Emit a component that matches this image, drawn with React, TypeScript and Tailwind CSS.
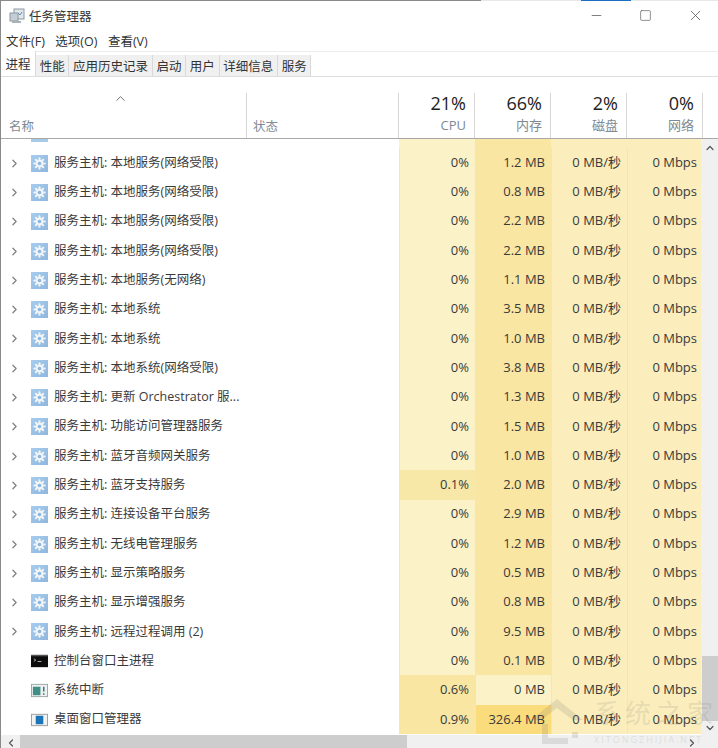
import { ChevronRight, ChevronUp, ChevronDown, ChevronLeft, Minus, Square, X } from "lucide-react";

type Kind = "svc" | "console" | "irq" | "dwm";

type Row = {
  name: string;
  cpu: string;
  mem: string;
  kind: Kind;
  cpuBg?: string;
  memBg: string;
};

const L1 = "bg-[#fbeebc]";
const L2 = "bg-[#f9e6a3]";
const L3 = "bg-[#f8e8a8]";
const LOW = "bg-[#fcf2c8]";
const HIGH = "bg-[#fbdc7c]";

const rows: Row[] = [
  { name: "服务主机: 本地服务(网络受限)", cpu: "0%", mem: "1.2 MB", kind: "svc", memBg: L2 },
  { name: "服务主机: 本地服务(网络受限)", cpu: "0%", mem: "0.8 MB", kind: "svc", memBg: L2 },
  { name: "服务主机: 本地服务(网络受限)", cpu: "0%", mem: "2.2 MB", kind: "svc", memBg: L2 },
  { name: "服务主机: 本地服务(网络受限)", cpu: "0%", mem: "2.2 MB", kind: "svc", memBg: L2 },
  { name: "服务主机: 本地服务(无网络)", cpu: "0%", mem: "1.1 MB", kind: "svc", memBg: L2 },
  { name: "服务主机: 本地系统", cpu: "0%", mem: "3.5 MB", kind: "svc", memBg: L2 },
  { name: "服务主机: 本地系统", cpu: "0%", mem: "1.0 MB", kind: "svc", memBg: L2 },
  { name: "服务主机: 本地系统(网络受限)", cpu: "0%", mem: "3.8 MB", kind: "svc", memBg: L2 },
  { name: "服务主机: 更新 Orchestrator 服...", cpu: "0%", mem: "1.3 MB", kind: "svc", memBg: L2 },
  { name: "服务主机: 功能访问管理器服务", cpu: "0%", mem: "1.5 MB", kind: "svc", memBg: L2 },
  { name: "服务主机: 蓝牙音频网关服务", cpu: "0%", mem: "1.0 MB", kind: "svc", memBg: L2 },
  { name: "服务主机: 蓝牙支持服务", cpu: "0.1%", mem: "2.0 MB", kind: "svc", cpuBg: L3, memBg: L2 },
  { name: "服务主机: 连接设备平台服务", cpu: "0%", mem: "2.9 MB", kind: "svc", memBg: L2 },
  { name: "服务主机: 无线电管理服务", cpu: "0%", mem: "1.2 MB", kind: "svc", memBg: L2 },
  { name: "服务主机: 显示策略服务", cpu: "0%", mem: "0.5 MB", kind: "svc", memBg: L2 },
  { name: "服务主机: 显示增强服务", cpu: "0%", mem: "0.8 MB", kind: "svc", memBg: L2 },
  { name: "服务主机: 远程过程调用 (2)", cpu: "0%", mem: "9.5 MB", kind: "svc", memBg: L2 },
  { name: "控制台窗口主进程", cpu: "0%", mem: "0.1 MB", kind: "console", memBg: L2 },
  { name: "系统中断", cpu: "0.6%", mem: "0 MB", kind: "irq", cpuBg: L2, memBg: LOW },
  { name: "桌面窗口管理器", cpu: "0.9%", mem: "326.4 MB", kind: "dwm", cpuBg: L2, memBg: HIGH },
];

function GearIcon() {
  return (
    <svg width="17" height="17" viewBox="0 0 18 18">
      <defs>
        <linearGradient id="tile" x1="0" y1="0" x2="1" y2="1">
          <stop offset="0" stopColor="#a6cdee" />
          <stop offset="1" stopColor="#8fb6dc" />
        </linearGradient>
      </defs>
      <rect width="18" height="18" fill="url(#tile)" />
      <g stroke="#eef4fa" strokeWidth="2.2" strokeLinecap="round">
        <path d="M9 3.5v11M3.5 9h11M5.1 5.1l7.8 7.8M12.9 5.1l-7.8 7.8" />
      </g>
      <circle cx="9" cy="9" r="4" fill="#eef4fa" />
      <circle cx="9" cy="9" r="1.9" fill="#8db6da" />
    </svg>
  );
}

function RowIcon({ kind }: { kind: Kind }) {
  if (kind === "svc") return <GearIcon />;
  if (kind === "console") {
    return (
      <svg width="17" height="17" viewBox="0 0 18 18">
        <rect y="2" width="18" height="13" fill="#0c0c0c" />
        <rect y="2" width="18" height="1.5" fill="#555" />
        <path d="M3 6l2 1.5-2 1.5M7 9h4" stroke="#bbb" strokeWidth="1" fill="none" />
      </svg>
    );
  }
  if (kind === "irq") {
    return (
      <svg width="17" height="17" viewBox="0 0 18 18">
        <rect x="0.5" y="2.5" width="17" height="13" fill="#eef1ef" stroke="#9aa5a5" />
        <rect x="2" y="5" width="8" height="9" fill="#3f8f88" />
        <path d="M13.5 5v5M13.5 12v1.5" stroke="#3f6f8f" strokeWidth="1.6" />
      </svg>
    );
  }
  return (
    <svg width="17" height="17" viewBox="0 0 18 18">
      <rect x="0.5" y="3.5" width="17" height="12" fill="#f2f2f0" stroke="#9c9c9c" />
      <rect x="5" y="5" width="8" height="9" fill="#1c74b8" />
    </svg>
  );
}

function AppIcon() {
  return (
    <svg width="16" height="16" viewBox="0 0 16 16">
      <rect x="5" y="1" width="10" height="10" fill="#dfe6ec" stroke="#8d979f" />
      <path d="M7 8l2-3 2 2 2-3" stroke="#5c8ab0" fill="none" />
      <rect x="1" y="5" width="8" height="8" fill="#c4cdd4" stroke="#8d979f" />
      <rect x="3" y="13" width="9" height="2" fill="#a9b2b9" />
    </svg>
  );
}

const tabs = ["性能", "应用历史记录", "启动", "用户", "详细信息", "服务"];

function MetricHead({ pct, label, width }: { pct: string; label: string; width: string }) {
  return (
    <div className={`${width} h-full shrink-0 border-l border-[#d6d6d6] flex flex-col items-end pr-[8px]`}>
      <span className="text-[18px] leading-[22px] mt-[-1px] text-[#222]">{pct}</span>
      <span className="text-[13px] leading-[18px] mt-[2px] text-[#7d8a96]">{label}</span>
    </div>
  );
}

function DataRow({ row }: { row: Row }) {
  return (
    <div className="flex h-[29.3px] items-stretch text-[13px] text-[#3a3a3a]">
      <div className="w-[398px] shrink-0 flex items-center min-w-0 text-[12.5px] pt-[1px]">
        <span className="w-[30px] shrink-0 flex pl-[7px]">
          {row.kind === "svc" && <ChevronRight size={13} strokeWidth={2.2} className="text-[#7f7f7f]" />}
        </span>
        <RowIcon kind={row.kind} />
        <span className="ml-[6px] whitespace-nowrap">{row.name}</span>
      </div>
      <Cell width="w-[76px]" bg={row.cpuBg ?? LOW} text={row.cpu} />
      <Cell width="w-[76px]" bg={row.memBg} text={row.mem} />
      <Cell width="w-[76px]" bg={L1} text="0 MB/秒" />
      <Cell width="w-[74px]" bg={L1} text="0 Mbps" pad="pr-[4px]" />
    </div>
  );
}

function Cell({ width, bg, text, pad = "pr-[6px]" }: { width: string; bg: string; text: string; pad?: string }) {
  return (
    <div className={`${width} ${bg} ${pad} shrink-0 flex items-center justify-end border-l border-[#f2e6b8]`}>
      <span className="whitespace-nowrap">{text}</span>
    </div>
  );
}

export default function App() {
  return (
    <div
      className="relative w-[718px] h-[748px] overflow-hidden bg-white border-l border-[#8a8a8a] flex flex-col"
      style={{ fontFamily: '"Open Sans", "Noto Sans CJK SC", sans-serif' }}
    >
      {/* top edge */}
      <div className="flex h-[1px] shrink-0">
        <div className="w-[480px] bg-[#8a8a8a]" />
        <div className="w-[100px] bg-[#e8e8e8]" />
        <div className="w-[50px] bg-[#1b6fc2]" />
        <div className="flex-1 bg-[#e8e8e8]" />
      </div>

      {/* title */}
      <div className="h-[29px] shrink-0 flex items-center pl-[8px] pr-[14px] text-[12.5px] text-[#333]">
        <AppIcon />
        <span className="ml-[4px] pt-[3px]">任务管理器</span>
        <div className="ml-auto flex items-center gap-[35px] text-[#555]">
          <Minus size={15} strokeWidth={1.2} />
          <Square size={13} strokeWidth={1.2} />
          <X size={17} strokeWidth={1.1} />
        </div>
      </div>

      {/* menu */}
      <div className="h-[22px] shrink-0 flex items-center gap-[10.5px] pl-[5px] pt-[3px] text-[12.5px] text-[#333] border-b border-[#ececec]">
        <span>文件(F)</span>
        <span>选项(O)</span>
        <span>查看(V)</span>
      </div>

      {/* tabs */}
      <div className="h-[25px] shrink-0 flex items-end border-b border-[#dedede] text-[12.5px] text-[#333]">
        <div className="w-[35px] h-[25px] flex items-center justify-center pt-[3px] bg-white border-r border-[#d9d9d9]">进程</div>
        {tabs.map((t) => (
          <div key={t} className="h-[21px] px-[3.7px] pt-[3px] flex items-center bg-[#f0f0f0] border-r border-[#d9d9d9]">
            {t}
          </div>
        ))}
      </div>

      {/* column heads */}
      <div className="h-[62px] shrink-0 flex border-b border-[#a8a8a8] pt-[16px]">
        <div className="w-[245px] shrink-0 relative flex items-end pl-[8px] pb-[1px] text-[12.5px] text-[#7d8a96]">
          <ChevronUp size={15} strokeWidth={1.5} className="absolute left-[112px] top-[-2px] text-[#666]" />
          <span>名称</span>
        </div>
        <div className="w-[152px] shrink-0 border-l border-[#d6d6d6] flex items-end pl-[6px] pb-[1px] text-[12.5px] text-[#7d8a96]">
          状态
        </div>
        <MetricHead pct="21%" label="CPU" width="w-[76px]" />
        <MetricHead pct="66%" label="内存" width="w-[76px]" />
        <MetricHead pct="2%" label="磁盘" width="w-[76px]" />
        <MetricHead pct="0%" label="网络" width="w-[76px]" />
        <div className="flex-1 border-l border-[#d6d6d6]" />
      </div>

      {/* table body + vertical scrollbar */}
      <div className="flex flex-1 min-h-0">
        <div className="w-[700px] shrink-0 overflow-hidden">
          <div className="flex h-[9px]">
            <div className="w-[398px] shrink-0 pl-[30px]">
              <div className="w-[17px] h-[3px] bg-[#a9cbe8]" />
            </div>
            <div className={`w-[76px] ${LOW}`} />
            <div className={`w-[76px] ${L2}`} />
            <div className={`w-[76px] ${L1}`} />
            <div className={`w-[74px] ${L1}`} />
          </div>
          {rows.map((r, i) => (
            <DataRow key={i} row={r} />
          ))}
        </div>
        <div className="flex-1 bg-[#f0f0f0] flex flex-col items-center pl-[1px]">
          <ChevronUp size={12} strokeWidth={2.4} className="mt-[3px] text-[#555]" />
          <div className="flex-1" />
          <div className="w-full h-[65px] bg-[#cdcdcd]" />
          <ChevronDown size={12} strokeWidth={2.4} className="my-[1px] text-[#555]" />
        </div>
      </div>

      {/* horizontal scrollbar */}
      <div className="h-[13px] shrink-0 flex items-center bg-[#f0f0f0]">
        <span className="w-[19px] shrink-0 flex justify-center pt-[3px]">
          <ChevronLeft size={12} strokeWidth={2.4} className="text-[#555]" />
        </span>
        <div className="w-[387px] h-full bg-[#cdcdcd]" />
        <div className="flex-1" />
        <ChevronRight size={12} strokeWidth={2.4} className="mr-[20px] mt-[3px] text-[#555]" />
      </div>

      {/* watermark */}
      <div className="absolute left-[529px] top-[696px] flex items-center gap-[10px] opacity-15 text-[#777] pointer-events-none">
        <svg width="54" height="50" viewBox="0 0 54 50">
          <path d="M1 24L27 3l26 21H43L27 12 11 24z" fill="#666" />
          <path d="M12 28v20h26v-6H18V28z" fill="#666" />
          <path d="M42 36h6v6h-6z" fill="#666" />
        </svg>
        <div className="flex flex-col items-start">
          <span className="text-[26px] leading-[32px] tracking-[5px] whitespace-nowrap">系统之家</span>
          <span className="text-[9px] leading-[10px] mt-[6px] tracking-[2px] whitespace-nowrap">XITONGZHIJIA.NET</span>
        </div>
      </div>
    </div>
  );
}
